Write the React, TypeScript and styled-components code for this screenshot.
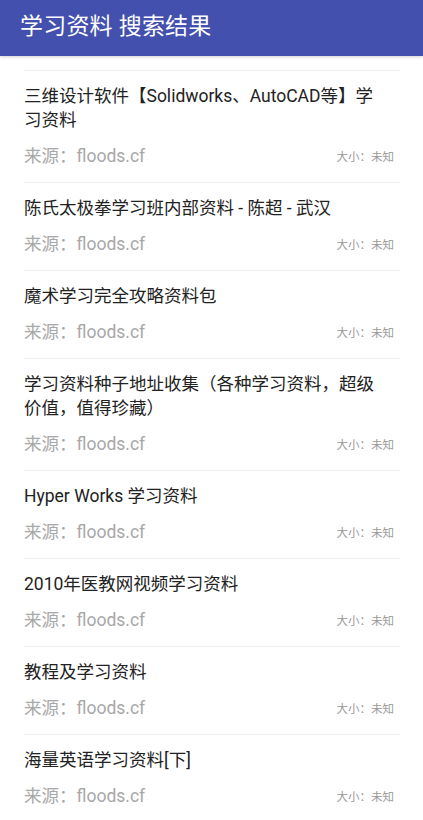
import React from "react";
import styled, { createGlobalStyle } from "styled-components";

const Global = createGlobalStyle`
  html, body { margin: 0; padding: 0; background: #fff; }
  body { font-family: Roboto, "Noto Sans CJK SC", "Noto Sans", sans-serif; }
`;

const Page = styled.div`
  width: 423px;
  min-height: 820px;
  background: #fff;
  overflow: hidden;
`;

const Header = styled.header`
  height: 56px;
  background: #4350ae;
  display: flex;
  align-items: center;
  padding: 0 20px;
  box-sizing: border-box;
  box-shadow: 0 1px 3px rgba(0, 0, 0, 0.18);
`;

const HeaderTitle = styled.h1`
  margin: 0;
  margin-top: -9px;
  color: #fff;
  font-size: 23px;
  font-weight: 400;
  letter-spacing: 0.2px;
`;

const List = styled.ul`
  list-style: none;
  margin: 14px 0 0;
  padding: 0 23px 0 24px;
`;

const Item = styled.li`
  border-top: 1px solid #eeeeee;
  padding: 13px 0 16px;
`;

const Title = styled.div`
  font-size: 17.5px;
  line-height: 24px;
  color: #222;
  padding-right: 20px;
`;

const Meta = styled.div`
  margin-top: 10px;
  height: 24px;
  display: flex;
  align-items: center;
  justify-content: space-between;
`;

const Source = styled.span`
  font-size: 17.5px;
  color: #a8a8a8;
`;

const Size = styled.span`
  font-size: 11.5px;
  color: #9a9a9a;
  margin-right: 6px;
  margin-top: 4px;
`;

const items = [
  "三维设计软件【Solidworks、AutoCAD等】学习资料",
  "陈氏太极拳学习班内部资料 - 陈超 - 武汉",
  "魔术学习完全攻略资料包",
  "学习资料种子地址收集（各种学习资料，超级价值，值得珍藏）",
  "Hyper Works 学习资料",
  "2010年医教网视频学习资料",
  "教程及学习资料",
  "海量英语学习资料[下]",
];

export default function App() {
  return (
    <Page>
      <Global />
      <Header>
        <HeaderTitle>学习资料 搜索结果</HeaderTitle>
      </Header>
      <List>
        {items.map((t) => (
          <Item key={t}>
            <Title>{t}</Title>
            <Meta>
              <Source>来源：floods.cf</Source>
              <Size>大小：未知</Size>
            </Meta>
          </Item>
        ))}
      </List>
    </Page>
  );
}
